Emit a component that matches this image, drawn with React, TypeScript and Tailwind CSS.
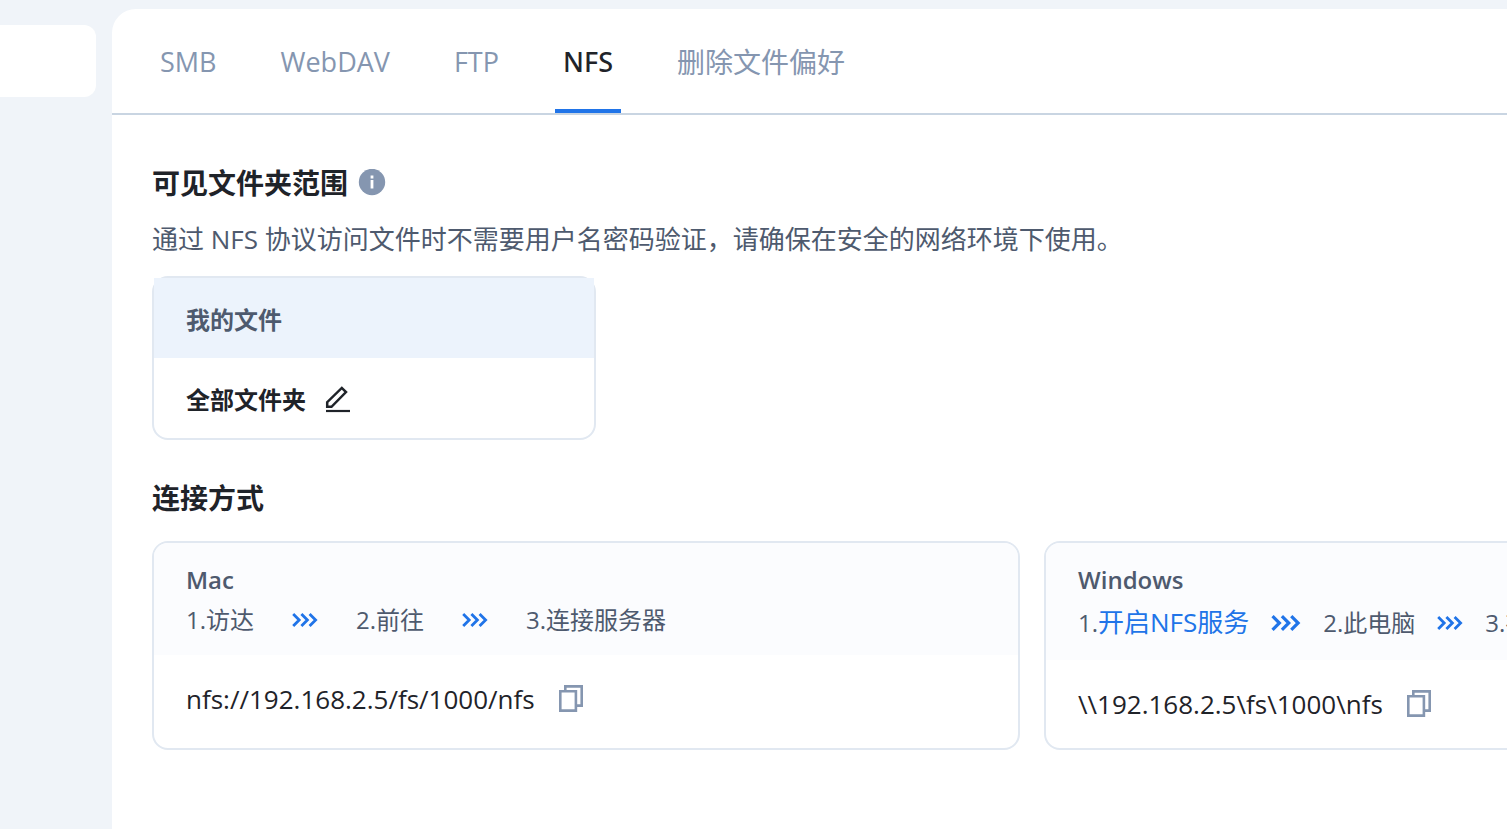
import type { ReactNode } from 'react'

const tabs = [
  { label: 'SMB', size: 'text-[27px]' },
  { label: 'WebDAV', size: 'text-[27px]' },
  { label: 'FTP', size: 'text-[27px]' },
  { label: 'NFS', size: 'text-[27px]', active: true },
  { label: '删除文件偏好', size: 'text-[28px]' },
]

function InfoIcon() {
  return (
    <svg viewBox="0 0 28 28" className="size-7" aria-hidden="true">
      <circle cx="14" cy="13" r="13.2" fill="#8596b0" />
      <path d="M12.6 6.6h2.8v2.8h-2.8zM12.6 11h2.8v8.6h-2.8z" fill="#fff" />
    </svg>
  )
}

function EditIcon() {
  return (
    <svg viewBox="0 0 28 28" className="size-7" fill="none" stroke="#1f2329" strokeWidth="2.5" aria-hidden="true">
      <path d="M3.2 20.8v-4.6L17.8 1.9l4.2 4.2L7.5 20.8H3.2z" />
      <path d="M2 25h24" strokeWidth="2.2" />
    </svg>
  )
}

function CopyIcon() {
  return (
    <svg viewBox="0 0 28 28" className="size-7" fill="none" stroke="#8596b0" strokeWidth="2.6" aria-hidden="true">
      <path d="M3.3 6.2h15.6v19.4H3.3z" />
      <path d="M8.3 6V1.4h16.4v19.2H19" />
    </svg>
  )
}

function Arrows({ className }: { className: string }) {
  return (
    <svg viewBox="0 0 26 14" className={className} fill="none" stroke="#2074e8" strokeWidth="2.8" aria-hidden="true">
      <path d="M1.2 1l6 6-6 6M9.4 1l6 6-6 6M17.6 1l6 6-6 6" />
    </svg>
  )
}

function AccessCard({ title, address, children }: { title: string; address: string; children: ReactNode }) {
  return (
    <section className="flex min-w-[868px] flex-1 flex-col overflow-hidden rounded-2xl border-2 border-[#e1e8f1]">
      <div className="bg-[#fbfcfe] px-8 pt-[17px] pb-[15px] text-2xl text-[#4e5a6e]">
        <h3 className="leading-10 font-semibold">{title}</h3>
        {children}
      </div>
      <div className="flex items-center gap-[22px] px-8 py-6">
        <span className="text-[26px] leading-10 text-[#1f2329]">{address}</span>
        <button type="button" aria-label="复制">
          <CopyIcon />
        </button>
      </div>
    </section>
  )
}

export default function App() {
  return (
    <div className="flex min-h-screen overflow-hidden bg-[#f0f4f9] font-['Open_Sans','Noto_Sans_CJK_SC',sans-serif]">
      {/* Sidebar */}
      <aside className="w-28 shrink-0 pt-[25px] pr-4">
        <div className="h-18 rounded-r-xl bg-white" />
      </aside>

      <main className="mt-[9px] min-w-0 flex-1 overflow-hidden rounded-tl-3xl bg-white">
        {/* Protocol tabs */}
        <nav className="flex h-[106px] gap-12 border-b-2 border-[#c9d5e2] px-10">
          {tabs.map((tab) => (
            <button
              key={tab.label}
              type="button"
              className={`border-b-4 px-2 pt-1.5 whitespace-nowrap ${tab.size} ${
                tab.active
                  ? "border-[#2074e8] font-['Noto_Sans'] font-medium text-[#1f2329]"
                  : 'border-transparent text-[#8596b0]'
              }`}
            >
              {tab.label}
            </button>
          ))}
        </nav>

        <div className="px-10 pt-12">
          {/* Visible folders */}
          <div className="flex items-center gap-2.5">
            <h2 className="text-[28px] leading-10 font-bold text-[#1f2329]">可见文件夹范围</h2>
            <button type="button" aria-label="说明">
              <InfoIcon />
            </button>
          </div>
          <p className="mt-4 text-[26px] leading-[41px] text-[#4e5a6e]">
            通过 NFS 协议访问文件时不需要用户名密码验证，请确保在安全的网络环境下使用。
          </p>
          <div className="mt-4 w-[444px] rounded-2xl border-2 border-[#e1e8f1] text-2xl font-bold">
            <div className="flex h-20 items-center bg-[#ecf3fc] px-8 pt-1 text-[#4e5a6e]">我的文件</div>
            <div className="flex h-20 items-center gap-[18px] px-8 pt-1 text-[#1f2329]">
              全部文件夹
              <button type="button" aria-label="编辑">
                <EditIcon />
              </button>
            </div>
          </div>

          {/* Connection guides */}
          <h2 className="mt-[38px] text-[28px] leading-10 font-bold text-[#1f2329]">连接方式</h2>
          <div className="mt-[23px] flex gap-6">
            <AccessCard title="Mac" address="nfs://192.168.2.5/fs/1000/nfs">
              <div className="flex items-center gap-[38px] leading-10 whitespace-nowrap">
                <span>1.访达</span>
                <Arrows className="h-3.5 w-[26px]" />
                <span>2.前往</span>
                <Arrows className="h-3.5 w-[26px]" />
                <span>3.连接服务器</span>
              </div>
            </AccessCard>
            <AccessCard title="Windows" address={'\\\\192.168.2.5\\fs\\1000\\nfs'}>
              <div className="flex items-center gap-[22px] leading-11 whitespace-nowrap">
                <span>
                  1.
                  <a href="#nfs" className="text-[26px] text-[#2074e8]">
                    开启NFS服务
                  </a>
                </span>
                <Arrows className="h-4 w-[30px]" />
                <span>2.此电脑</span>
                <Arrows className="h-3.5 w-[26px]" />
                <span>3.在地址栏输入以下地址</span>
              </div>
            </AccessCard>
          </div>
        </div>
      </main>
    </div>
  )
}
